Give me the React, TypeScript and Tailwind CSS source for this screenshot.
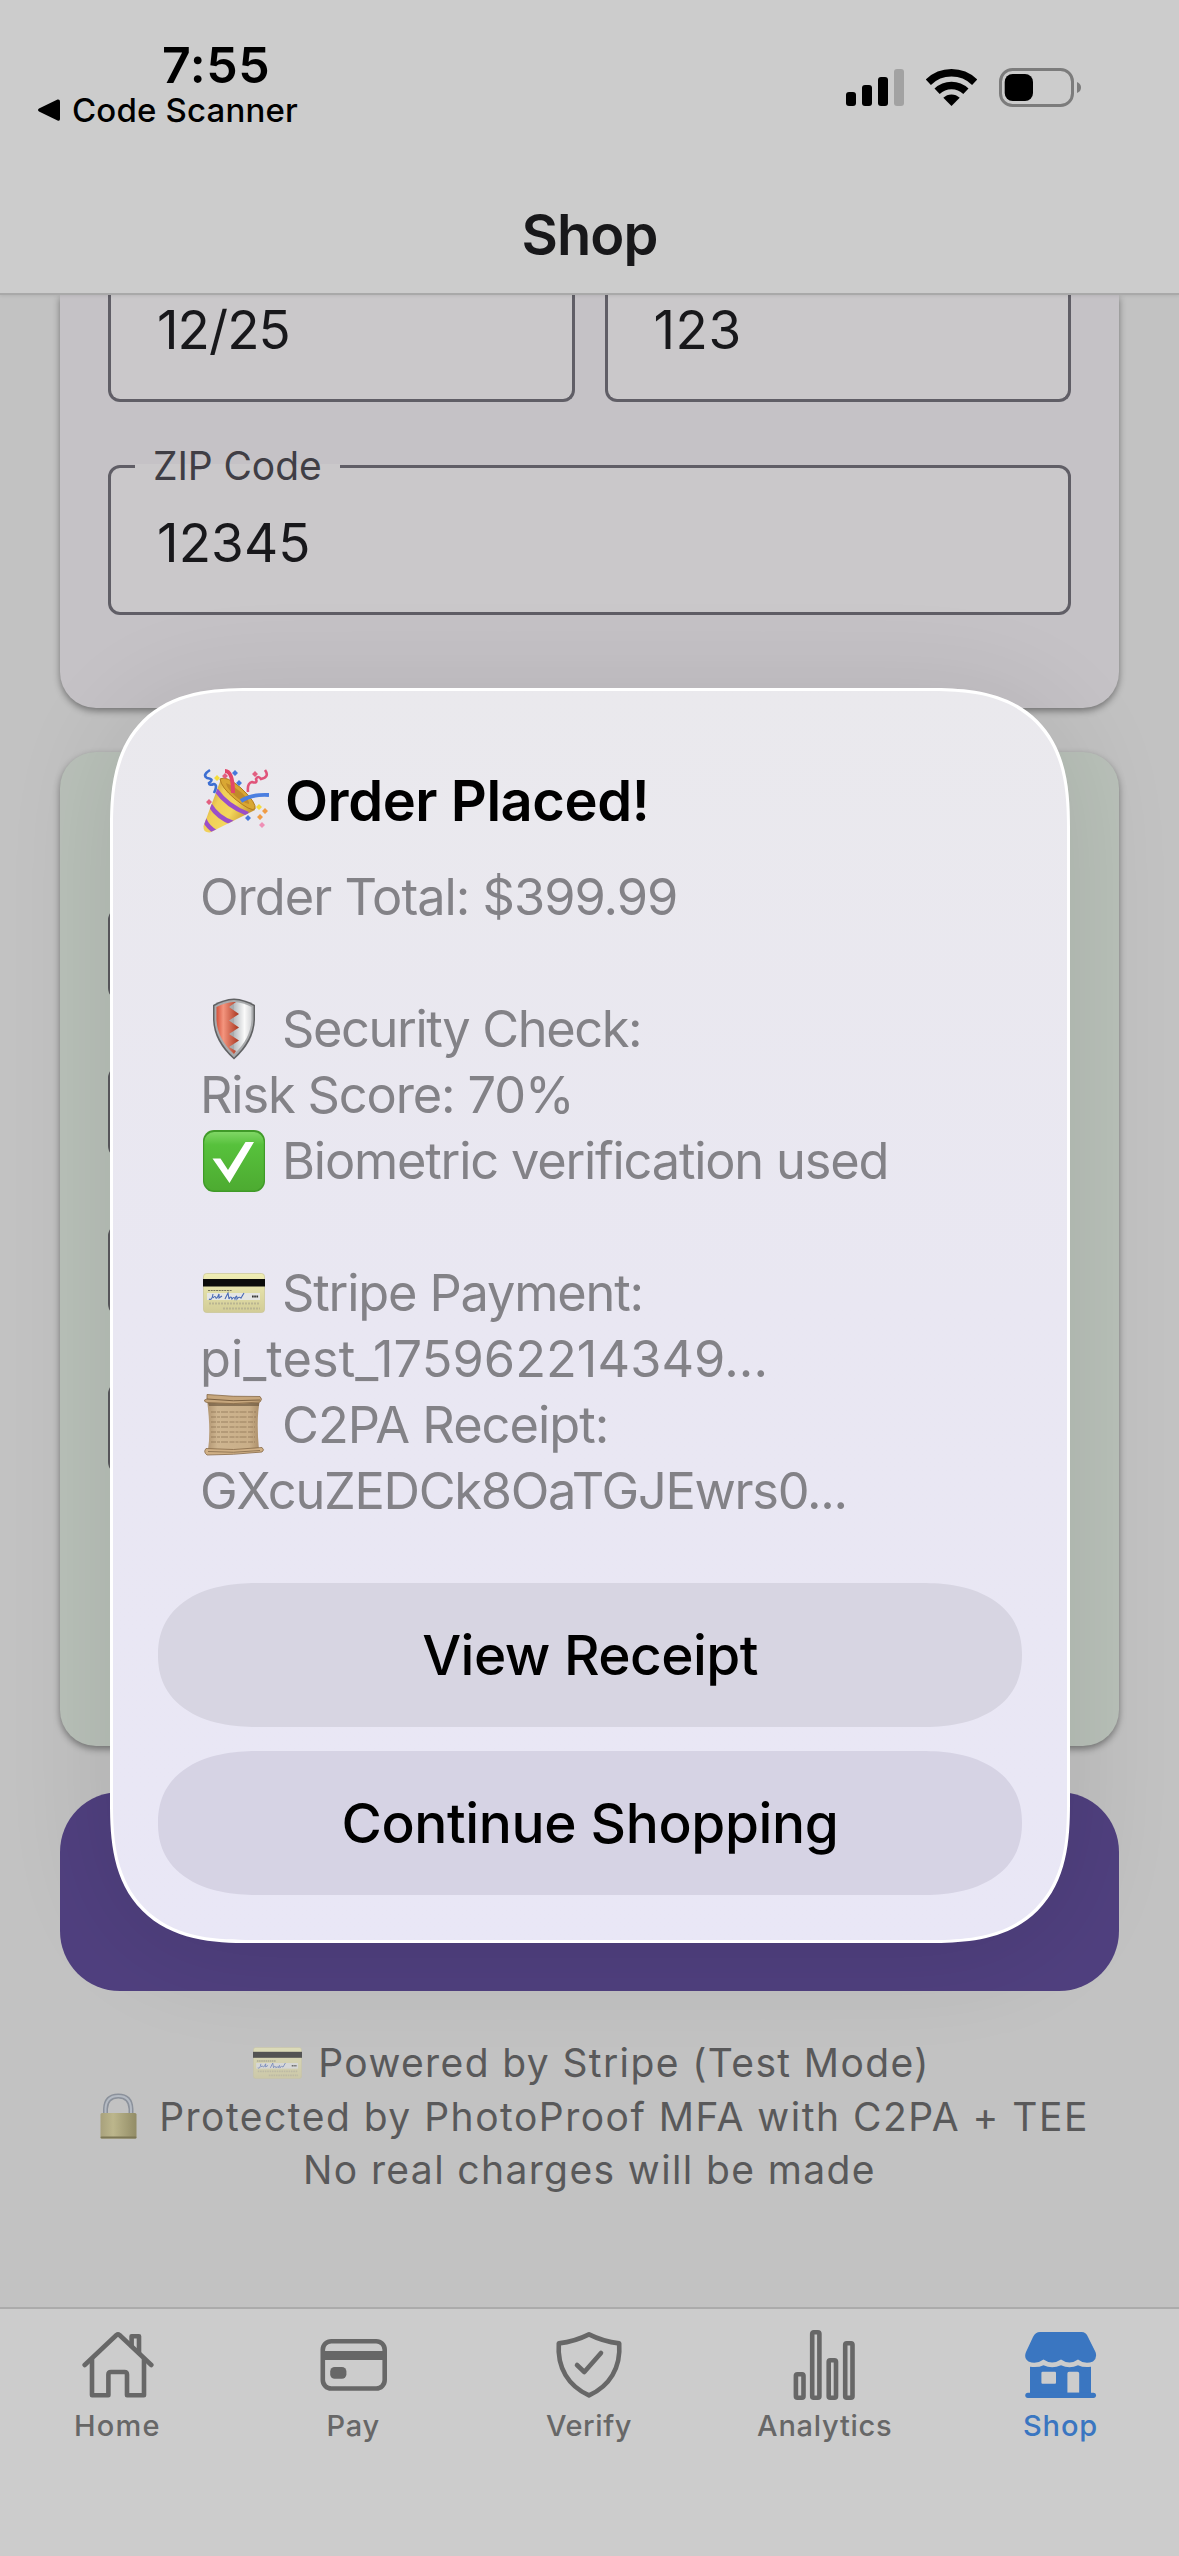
import React from "react";

function PartyPopper() {
  return (
    <svg viewBox="0 0 66 66" className="h-[66px] w-[66px] shrink-0">
      <defs>
        <linearGradient id="cone" x1="0" y1="0.3" x2="0.9" y2="0.8">
          <stop offset="0" stopColor="#c2932a" />
          <stop offset="0.3" stopColor="#f0cf58" />
          <stop offset="0.6" stopColor="#f3d75c" />
          <stop offset="1" stopColor="#c08a28" />
        </linearGradient>
        <clipPath id="coneClip">
          <path d="M18 11 L52 42 L7 64.500 Q0 65 0.500 58 Z" />
        </clipPath>
      </defs>
      <path d="M18 11 L52 42 L7 64.500 Q0 65 0.500 58 Z" fill="url(#cone)" />
      <g clipPath="url(#coneClip)" fill="none" stroke="#9a4fc9" strokeWidth="4.500">
        <path d="M13 22 Q24 38 45 46" />
        <path d="M7 37 Q15 50 30 55" />
        <path d="M1 51 Q5 60 13 64" />
      </g>
      <path d="M17 11 Q23 7 38 20 Q54 35 52 41 Q48 44 32 31 Q18 19 17 11Z" fill="#d9a733" stroke="#b27c1e" strokeWidth="1" />
      <path d="M23 15 Q29 17 39 25 Q47 33 46 36 Q38 34 30 26 Q24 20 23 15Z" fill="#c18a2a" />
      <path d="M22 3 Q30 3 30 25" fill="none" stroke="#e2476a" strokeWidth="4" />
      <path d="M38 33 Q48 26 66 27" fill="none" stroke="#4b7fe0" strokeWidth="4" />
      <path d="M7 2 Q-1 7 4 10 Q12 11 6 15 Q6 18 11 16 Q15 17 11 25" fill="none" stroke="#3d6fd2" strokeWidth="2.600" />
      <path d="M62 2 Q67 9 58 11 Q55 7 53 11 Q55 16 49 14 Q44 15 45 24" fill="none" stroke="#e0537a" strokeWidth="2.600" />
      <g>
        <path d="M32 2 l3 3 -3 3 -3 -3z M36 12 l3 3 -3 3 -3 -3z M45 47 l3 3 -3 3 -3 -3z" fill="#4678dc" />
        <path d="M22 5 l3 3 -3 3 -3 -3z M52 3 l3 3 -3 3 -3 -3z M6 31 l3 3 -3 3 -3 -3z" fill="#e25f80" />
        <path d="M14 7 l3 3 -3 3 -3 -3z M56 36 l3 3 -3 3 -3 -3z" fill="#f4dd3e" />
        <path d="M62 40 l3 3 -3 3 -3 -3z M57 46 l3 3 -3 3 -3 -3z" fill="#f09c45" />
        <path d="M59 54 l3 3 -3 3 -3 -3z" fill="#ef8fb6" />
      </g>
    </svg>
  );
}

function ShieldEmoji() {
  return (
    <svg viewBox="0 0 62 62" className="h-[62px] w-[62px] shrink-0">
      <defs>
        <linearGradient id="shRed" x1="0" x2="1">
          <stop offset="0" stopColor="#d4523c" />
          <stop offset="0.3" stopColor="#f4957e" />
          <stop offset="1" stopColor="#a9351f" />
        </linearGradient>
        <linearGradient id="shSilver" x1="0" x2="1">
          <stop offset="0" stopColor="#b7bbbf" />
          <stop offset="0.6" stopColor="#fafafa" />
          <stop offset="1" stopColor="#d5d6d8" />
        </linearGradient>
      </defs>
      <path d="M31 0.5 Q42 1 52 7 V22 Q51 44 31 61.5 Q11 44 10 22 V7 Q20 1 31 0.5Z" fill="#606163" />
      <path d="M31 2 Q41 2.5 50.5 8 V22 Q49.500 42 31 59.500 Q12.500 42 11.500 22 V8 Q21 2.500 31 2Z" fill="#a9abad" />
      <path d="M31 4 Q40 4.500 48.500 9 V22 Q47.500 41 31 56 Z" fill="url(#shSilver)" />
      <path d="M31 4 Q22 4.500 13.500 9 V22 Q14.500 41 31 56 L33 53 L26 49 L36 42.500 L26 36 L36 29.500 L26 22.500 L36 16 L26 9 L33 4Z" fill="url(#shRed)" />
    </svg>
  );
}

function CheckEmoji() {
  return (
    <svg viewBox="0 0 62 62" className="h-[62px] w-[62px] shrink-0">
      <defs>
        <linearGradient id="chk" x1="0" y1="0" x2="0" y2="1">
          <stop offset="0" stopColor="#7fd665" />
          <stop offset="0.22" stopColor="#57c13c" />
          <stop offset="1" stopColor="#4dab31" />
        </linearGradient>
      </defs>
      <rect x="0" y="0" width="62" height="62" rx="11" fill="#3f9a28" />
      <rect x="1.200" y="2" width="59.600" height="58.500" rx="10" fill="url(#chk)" />
      <path d="M9.500 28.500 H17.500 L25 40 L42.500 12 H51 L26.500 53Z" fill="#fff" />
    </svg>
  );
}

function CardArt({ className }: { className: string }) {
  return (
    <svg viewBox="0 0 62 40" className={className} preserveAspectRatio="none">
      <defs>
        <linearGradient id="card" x1="0" y1="0" x2="0" y2="1">
          <stop offset="0" stopColor="#efedb4" />
          <stop offset="1" stopColor="#d2cc97" />
        </linearGradient>
      </defs>
      <rect x="0.500" y="0.500" width="61" height="39" rx="3" fill="url(#card)" stroke="#c9c494" strokeWidth="0.700" />
      <rect x="0" y="6" width="62" height="7.500" fill="#0b0b0b" />
      <path d="M5 17.500 H29" stroke="#77755c" strokeWidth="1.200" strokeDasharray="2 0.700" />
      <rect x="4" y="20" width="53" height="7" fill="#e4e5e4" />
      <path d="M6 26 q3 2 4-5 M10 25 q2-3 3 0 q1 1 3-4 v4 l3-2 M22 26 l3-6 1 6 M26 26 q2-4 3 0 q2-3 3 0 q2-6 2 0 q2-3 4-1 l3-5" stroke="#4869b5" strokeWidth="1.100" fill="none" />
      <path d="M49 23.500 h6.500" stroke="#333" strokeWidth="2" strokeDasharray="1.700 0.500" />
      <path d="M6 30.500 H57 M20 35.500 H57" stroke="#bab591" strokeWidth="2" strokeDasharray="2 1" />
    </svg>
  );
}

function ScrollEmoji() {
  return (
    <svg viewBox="0 0 62 62" className="h-[62px] w-[62px] shrink-0">
      <defs>
        <linearGradient id="scr" x1="0" y1="0" x2="1" y2="0">
          <stop offset="0" stopColor="#b29672" />
          <stop offset="0.2" stopColor="#ceb590" />
          <stop offset="0.8" stopColor="#c9ae88" />
          <stop offset="1" stopColor="#aa8d68" />
        </linearGradient>
      </defs>
      <path d="M4 6 H57 Q53 24 56 56 H5 Q8 36 4 6Z" fill="url(#scr)" />
      <path d="M5 9 H56 V12 H6Z" fill="#6f5a40" opacity="0.700" />
      <g stroke="#846b4c" strokeWidth="1.200" strokeDasharray="5 1 3 1 7 1.500" opacity="0.650">
        <path d="M8 18 H53" /><path d="M8 23 H53" /><path d="M8 28 H52" /><path d="M8 33 H52" />
        <path d="M8 38 H52" /><path d="M8 43 H52" /><path d="M8 48 H52" />
      </g>
      <path d="M4 0.500 Q30 3 57 2.500 Q60 5 57 8 Q30 11 4 8.500 Q1 8 1.500 6 L4 5Z" fill="#c6a67c" stroke="#866a48" strokeWidth="0.800" />
      <path d="M4 5 Q30 8 57 6" fill="none" stroke="#7c6142" strokeWidth="1" />
      <path d="M3 54.500 Q30 57 59 53.500 Q62 56 59 58 Q30 61 4 61 Q0 58 3 54.500Z" fill="#d0b086" stroke="#866a48" strokeWidth="0.800" />
      <path d="M5 57.500 Q30 59.500 57 56.500" fill="none" stroke="#8c7250" strokeWidth="0.900" />
    </svg>
  );
}

function LockEmoji() {
  return (
    <svg viewBox="0 0 49 49" className="h-[49px] w-[49px] shrink-0">
      <defs>
        <linearGradient id="lock" x1="0" x2="1">
          <stop offset="0" stopColor="#a8a17c" />
          <stop offset="0.350" stopColor="#bcb68c" />
          <stop offset="1" stopColor="#928c66" />
        </linearGradient>
      </defs>
      <path d="M11.500 24 V17 Q12 4 24.300 4 Q36.500 4 37 17 V24" fill="none" stroke="#8b919b" strokeWidth="5" />
      <path d="M11.500 24 V17 Q12 4 24.300 4 Q36.500 4 37 17 V24" fill="none" stroke="#b4bac3" strokeWidth="2" />
      <rect x="6.500" y="21" width="36" height="25.500" rx="1.500" fill="url(#lock)" />
      <rect x="6.500" y="44.500" width="36" height="2" rx="1" fill="#7d7755" />
    </svg>
  );
}

function StatusIcons() {
  return (
    <div className="flex items-start pt-[68px] pr-[98px]">
      <svg viewBox="0 0 58 39" className="mr-[22px] h-[39px] w-[58px]">
        <rect x="0" y="24" width="10" height="14" rx="3" />
        <rect x="16" y="17" width="10" height="21" rx="3" />
        <rect x="32" y="9" width="10" height="29" rx="3" />
        <rect x="48" y="1" width="10" height="37" rx="3" fill="#a2a2a2" />
      </svg>
      <svg viewBox="0 0 51 39" className="mr-[22px] h-[39px] w-[51px]">
        <g fill="none" stroke="#000" strokeWidth="7.500">
          <path d="M2.300 14.200 A33.200 33.200 0 0 1 48.700 14.200" />
          <path d="M11.100 23.300 A20.800 20.800 0 0 1 39.900 23.300" />
        </g>
        <path d="M25.500 38 L17.300 29.800 A11.600 11.600 0 0 1 33.700 29.800 Z" />
      </svg>
      <svg viewBox="0 0 82 39" className="h-[39px] w-[82px]">
        <rect x="1.500" y="1.500" width="72" height="36" rx="12" fill="none" stroke="#7c7c7c" strokeWidth="3" />
        <rect x="5.700" y="6" width="28.300" height="27" rx="8" />
        <path d="M78 14 Q82 15.500 82 19.500 Q82 23.500 78 25Z" fill="#7c7c7c" />
      </svg>
    </div>
  );
}

function HomeIcon() {
  return (
    <g fill="none" stroke="currentColor" strokeWidth="4.600" strokeLinecap="round" strokeLinejoin="round">
      <path d="M2.700 35 L34.500 5 Q36 3.800 37.500 5 L69.300 35" />
      <path d="M10 29.500 V65.300 H26.400 V44.500 Q26.400 42 29 42 H42.500 Q45 42 45 44.500 V65.300 H62 V29.500" />
      <path d="M49.600 16 V6.300 H57 V23" />
    </g>
  );
}
function PayIcon() {
  return (
    <g>
      <rect x="4.800" y="11.200" width="61.900" height="47.300" rx="8.500" fill="none" stroke="currentColor" strokeWidth="4.600" />
      <rect x="4" y="21" width="63" height="9" fill="currentColor" />
      <rect x="12.200" y="37" width="16.200" height="11.800" rx="4.500" fill="currentColor" />
    </g>
  );
}
function VerifyIcon() {
  return (
    <g fill="none" stroke="currentColor" strokeWidth="4.600" strokeLinecap="round" strokeLinejoin="round">
      <path d="M36 4.400 Q50 11.500 66.200 13.400 C68 38 56.500 56 36 65.400 C15.500 56 4 38 5.800 13.400 Q22 11.500 36 4.400Z" />
      <path d="M24 35 L31.300 42 L48 23" />
    </g>
  );
}
function AnalyticsIcon() {
  return (
    <g fill="none" stroke="currentColor" strokeWidth="4.600">
      <rect x="6.900" y="44.300" width="7.600" height="23.400" rx="1.500" />
      <rect x="23.200" y="2.300" width="7.200" height="65.400" rx="1.500" />
      <rect x="39.700" y="30.300" width="7.300" height="37.400" rx="1.500" />
      <rect x="56.200" y="13.300" width="7.300" height="54.400" rx="1.500" />
    </g>
  );
}
function ShopIcon() {
  return (
    <g fill="currentColor">
      <path d="M15 2 H56.500 Q61 2 63 7 L70.500 22 Q72.500 28 68 31.500 Q60 35 53 29.500 Q44.500 35.500 36 29.500 Q27 35.500 18.500 29.500 Q11 35 3.500 31.500 Q-1.500 28 1 22 L8 7 Q10.500 2 15 2Z" />
      <path fillRule="evenodd" d="M5 36.700 Q13 38 18.500 35.200 Q27 39.500 36 35.200 Q44.500 39.500 53 35.200 Q59 38 66 36.700 V63 H5Z M17.500 41.700 Q16.400 41.700 16.400 43 V52.500 Q16.400 53.700 17.500 53.700 H30 Q31 53.700 31 52.500 V43 Q31 41.700 30 41.700Z M44 41.700 Q42.400 41.700 42.400 43.500 V62.700 H54.200 V43.500 Q54.200 41.700 52.500 41.700Z" />
      <rect x="0.300" y="62.700" width="70.700" height="5.200" rx="2.600" />
    </g>
  );
}

const tabs = [
  { label: "Home", icon: <HomeIcon />, cls: "text-[#676767] tracking-[1.2px]" },
  { label: "Pay", icon: <PayIcon />, cls: "text-[#676767] tracking-[0.7px]" },
  { label: "Verify", icon: <VerifyIcon />, cls: "text-[#676767] tracking-[0.6px]" },
  { label: "Analytics", icon: <AnalyticsIcon />, cls: "text-[#676767] tracking-[0.75px]" },
  { label: "Shop", icon: <ShopIcon />, cls: "text-[#3a76c1] tracking-[0.9px]" },
];

const details: { text: string; cls: string; emoji?: React.ReactNode }[] = [
  { text: "Order Total: $399.99", cls: "tracking-[-0.99px]" },
  { text: "", cls: "" },
  { text: "Security Check:", cls: "tracking-[-1.39px]", emoji: <ShieldEmoji /> },
  { text: "Risk Score: 70%", cls: "tracking-[-1.14px]" },
  { text: "Biometric verification used", cls: "tracking-[-1.19px]", emoji: <CheckEmoji /> },
  { text: "", cls: "" },
  { text: "Stripe Payment:", cls: "tracking-[-1.16px]", emoji: <CardArt className="h-[40px] w-[62px] shrink-0" /> },
  { text: "pi_test_175962214349...", cls: "tracking-[0.06px]" },
  { text: "C2PA Receipt:", cls: "tracking-[-0.98px]", emoji: <ScrollEmoji /> },
  { text: "GXcuZEDCk8OaTGJEwrs0...", cls: "tracking-[-1.28px]" },
];

function OrderDialog() {
  return (
    <div className="absolute top-[688px] left-[110px] flex h-[1255px] w-[960px] flex-col rounded-[140px] border-[3px] border-white bg-linear-to-b from-[#eae9ed] via-[#e9e7f2] to-[#e9e7f6] shadow-[0_10px_110px_rgba(0,0,0,0.11)] [corner-shape:superellipse(1.4)]">
      <div className="mt-[75px] flex h-[70px] items-start pl-[90px]">
        <div className="mt-[2px]"><PartyPopper /></div>
        <h2 className="ml-[16px] text-[56px] leading-[70px] font-semibold tracking-[-0.45px] text-black">Order Placed!</h2>
      </div>
      <div className="mt-[28px] pl-[87px] text-[50.5px] leading-[66px] text-[#838287]">
        {details.map((d, i) => (
          <div key={i} className="flex h-[66px] items-center">
            {d.emoji && <span className="mr-[17px] ml-[3px]">{d.emoji}</span>}
            <span className={"whitespace-nowrap " + d.cls}>{d.text}</span>
          </div>
        ))}
      </div>
      <div className="mx-[45px] mt-[59px] flex flex-col gap-[24px] text-[55px] leading-[144px] font-medium text-black">
        <button className="h-[144px] rounded-[100px/72px] bg-[#d7d5e2] tracking-[-0.55px] [corner-shape:superellipse(1.2)]">View Receipt</button>
        <button className="h-[144px] rounded-[100px/72px] bg-[#d6d3e4] tracking-[-0.36px] [corner-shape:superellipse(1.2)]">Continue Shopping</button>
      </div>
    </div>
  );
}

export default function App() {
  return (
    <div className="relative flex h-[2556px] w-[1179px] flex-col overflow-hidden bg-[#c2c2c2] font-['Inter',sans-serif]">
      <header className="relative z-10 h-[295px] shrink-0 border-b-2 border-[#a9a9a9] bg-[#cccccc] shadow-[0_1px_3px_rgba(0,0,0,0.08)]">
        <div className="flex h-[200px] items-start justify-between">
          <div className="pt-[35px] text-black">
            <div className="pl-[162px] text-[50px] leading-[60px] font-semibold tracking-[0.6px]">7:55</div>
            <div className="-mt-[5px] flex items-center pl-[37px]">
              <svg viewBox="0 0 24 24" className="h-[24px] w-[24px]">
                <path d="M2 10.500 L20.500 1.500 Q23 1 23 3.500 V21 Q23 23.500 20.500 22.500 L2 13.500 Q0 12 2 10.500Z" />
              </svg>
              <span className="ml-[11px] text-[33px] leading-[40px] font-medium tracking-[0.16px]">Code Scanner</span>
            </div>
          </div>
          <StatusIcons />
        </div>
        <h1 className="text-center text-[56px] leading-[70px] font-semibold tracking-[-0.94px] text-[#18181a]">Shop</h1>
      </header>

      <main className="flex h-[2012px] shrink-0 flex-col px-[60px]">
        <section className="flex h-[413px] shrink-0 flex-col gap-[63px] rounded-b-[36px] bg-[#c5c2c6] px-[48px] text-[53px] text-[#18181b] shadow-[0_3px_7px_rgba(0,0,0,0.4)]">
          <div className="flex h-[107px] gap-[30px]">
            <div className="flex-1 rounded-b-[12px] border-3 border-t-0 border-[#605e66] bg-[#cac8ca] pl-[46px] leading-[70px] tracking-[-0.95px]">12/25</div>
            <div className="flex-1 rounded-b-[12px] border-3 border-t-0 border-[#605e66] bg-[#cac8ca] pl-[46px] leading-[70px] tracking-[0.56px]">123</div>
          </div>
          <div className="relative flex h-[150px] items-center rounded-[12px] border-3 border-[#605e66] bg-[#cac8ca] pt-[7px] pl-[46px] tracking-[0.1px]">
            <span className="absolute -top-[4px] left-[24px] h-[5px] w-[205px] bg-[#cac8ca]" />
            <span className="absolute -top-[22px] left-[42px] text-[39px] leading-[40px] tracking-[-0.1px] text-[#403e45]">ZIP Code</span>
            12345
          </div>
        </section>

        <section className="mt-[44px] flex h-[994px] shrink-0 flex-col gap-[66px] rounded-[36px] bg-[#b9c1b9] pt-[156px] pl-[48px] shadow-[0_3px_7px_rgba(0,0,0,0.4)]">
          {[0, 1, 2, 3].map((i) => (
            <div key={i} className="h-[92px] w-[92px] rounded-[12px] border-3 border-[#5a595e]" />
          ))}
        </section>

        <div className="mt-[46px] h-[199px] shrink-0 rounded-[60px] bg-[#50407f]" />

        <footer className="mt-[45px] -mr-[20px] -ml-[20px] text-[39px] leading-[53.5px] text-[#59595a]">
          <div className="flex h-[53.5px] items-center justify-center gap-[16px] pl-[4px] tracking-[1.38px]">
            <CardArt className="h-[32px] w-[49px] shrink-0 opacity-60" />
            <span>Powered by Stripe (Test Mode)</span>
          </div>
          <div className="flex h-[53.5px] items-center justify-center gap-[16px] pl-[4px] tracking-[1.49px] whitespace-nowrap">
            <LockEmoji />
            <span>Protected by PhotoProof MFA with C2PA + TEE</span>
          </div>
          <p className="text-center tracking-[1.38px]">No real charges will be made</p>
        </footer>
      </main>

      <nav className="flex h-[249px] shrink-0 border-t-2 border-[#ababab] bg-[#cccccc] pt-[21px]">
        {tabs.map((t) => (
          <div key={t.label} className={"flex flex-1 flex-col items-center " + t.cls}>
            <svg viewBox="0 0 72 72" className="h-[72px] w-[72px]">{t.icon}</svg>
            <span className="mt-[6px] -ml-[1px] text-[29px] leading-[36px] font-medium">{t.label}</span>
          </div>
        ))}
      </nav>

      <OrderDialog />
    </div>
  );
}
